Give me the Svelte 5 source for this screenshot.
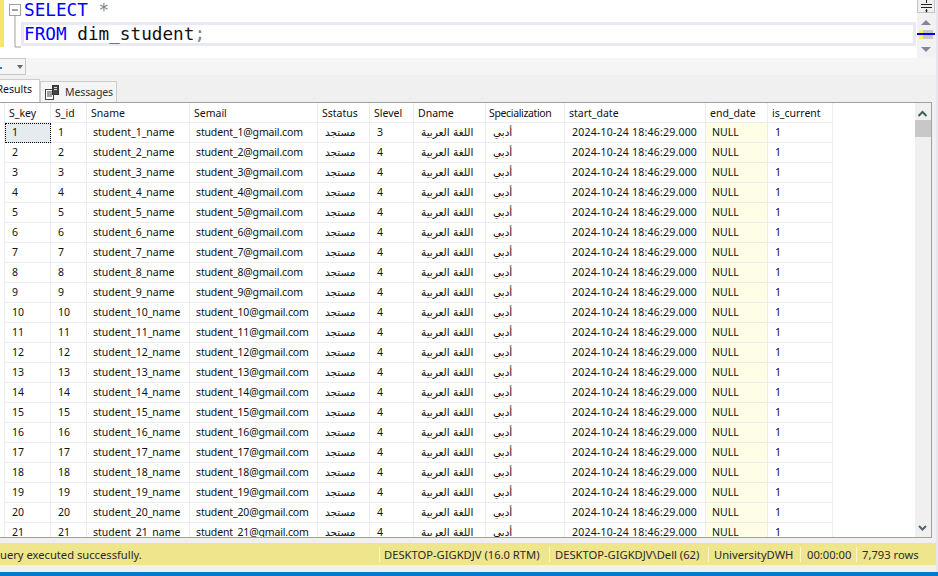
<script>
  const cols = ['S_key','S_id','Sname','Semail','Sstatus','Slevel','Dname','Specialization','start_date','end_date','is_current'];
  const rows = Array.from({length: 21}, (_, i) => i + 1);
</script>

<div class="page">
  <section class="editor">
    <div class="margin"></div>
    <div class="gutter">
      <svg class="fold" width="13" height="48" viewBox="0 0 13 48">
        <rect x="0.5" y="4.5" width="11" height="11" fill="#fff" stroke="#a0a0a0"/>
        <path d="M3 10h6" stroke="#444"/>
        <path d="M6 16v31h6" fill="none" stroke="#a0a0a0"/>
      </svg>
    </div>
    <div class="code">
      <div class="line"><span class="kw">SELECT</span> <span class="op">*</span></div>
      <div class="line current"><span class="kw">FROM</span> dim_student<span class="op">;</span></div>
    </div>
    <aside class="split">
      <div class="splitter">
        <svg width="15" height="13" viewBox="0 0 15 13"><path d="M2 4.5h11M2 7.5h11" stroke="#222"/><path d="M7.5 0v3M7.5 9v3" stroke="#222"/><path d="M6 10.5l1.5 2 1.5-2z" fill="#222"/></svg>
      </div>
      <div class="arrow up"></div>
      <div class="mark"></div>
      <div class="arrow down"></div>
    </aside>
  </section>

  <div class="zoombar">
    <div class="zoomsel"><span class="dot"></span><span class="caret"></span></div>
  </div>

  <div class="results">
    <div class="tabs">
      <div class="tab active">Results</div>
      <div class="tab">
        <svg width="15" height="15" viewBox="0 0 15 15"><rect x="0.5" y="4.5" width="8" height="10" fill="#fff" stroke="#444"/><path d="M2 7h5M2 9h5M2 11h5" stroke="#444"/><rect x="7.5" y="0.5" width="6" height="9" fill="#444" stroke="#333"/><path d="M9 2.5h3M9 4.5h3" stroke="#ddd"/></svg>
        <span class="msgs">Messages</span>
      </div>
    </div>
    <div class="gridframe">
      <div class="grid">
        <div class="row head">
          {#each cols as c}<div class="cell" class:spec={c === 'Specialization'}>{c}</div>{/each}
        </div>
        {#each rows as n}
          <div class="row">
            <div class="cell num" class:selected={n === 1}>{n}</div>
            <div class="cell num">{n}</div>
            <div class="cell">student_{n}_name</div>
            <div class="cell mail">student_{n}@gmail.com</div>
            <div class="cell ar">مستجد</div>
            <div class="cell num">{n === 1 ? 3 : 4}</div>
            <div class="cell ar">اللغة العربية</div>
            <div class="cell ar">أدبي</div>
            <div class="cell date">2024-10-24 18:46:29.000</div>
            <div class="cell null">NULL</div>
            <div class="cell num">1</div>
          </div>
        {/each}
      </div>
      <div class="vscroll">
        <svg class="top" width="15" height="10" viewBox="0 0 15 10"><path d="M3.5 7l4-4 4 4" fill="none" stroke="#40605f" stroke-width="2"/></svg>
        <div class="thumb"></div>
        <svg class="bottom" width="15" height="16" viewBox="0 0 15 16"><path d="M4 6l3.5 3.5L11 6" fill="none" stroke="#50686a" stroke-width="2"/></svg>
      </div>
    </div>
  </div>

  <footer class="status">
    <span class="msg">uery executed successfully.</span>
    <span class="seg s1">DESKTOP-GIGKDJV (16.0 RTM)</span>
    <span class="seg s2">DESKTOP-GIGKDJV\Dell (62)</span>
    <span class="seg s3">UniversityDWH</span>
    <span class="seg s4">00:00:00</span>
    <span class="seg s5">7,793 rows</span>
  </footer>
  <div class="gap"></div>
  <div class="blue"></div>
</div>

<style>
  :global(body) { margin: 0; overflow: hidden; background: #f0f0f0; }
  .page { position: relative; width: 938px; height: 576px; display: flex; flex-direction: column; overflow: hidden; font-family: "Noto Sans", sans-serif; color: #111; }
  .page::after { content: ""; position: absolute; right: 0; top: 0; width: 2px; height: 572px; background: #e6e6f0; }

  .editor { height: 58px; display: flex; background: #fff; flex: none; }
  .margin { width: 4px; height: 47px; background: #f5e56b; flex: none; }
  .gutter { width: 17px; flex: none; }
  .fold { display: block; margin-left: 5px; }
  .code { width: 895px; flex: none; margin-right: 1px; font-family: "DejaVu Sans Mono", monospace; font-size: 17.7px; }
  .line { height: 22px; line-height: 21px; padding-left: 3px; white-space: pre; }
  .line.current { height: 24px; box-sizing: border-box; padding-left: 0; border: 3px solid #e9e9f3; line-height: 18px; }
  .kw { color: #0000ff; }
  .op { color: #808080; }

  .split { width: 21px; background: #f2f2f2; flex: none; }
  .splitter { width: 18px; height: 13px; box-sizing: border-box; background: #f0f0f0; border: 1px solid #c4c4c4; border-top: 0; display: flex; justify-content: center; }
  .arrow { width: 0; height: 0; border-left: 5px solid transparent; border-right: 5px solid transparent; margin-left: 4px; }
  .arrow.up { border-bottom: 5px solid #8a8399; margin-top: 7px; }
  .mark { width: 14px; box-sizing: border-box; height: 9px; margin: 5px 0 0 2px; background: #c8c8c8; position: relative; border-left: 4px solid #ffef60; }
  .mark::after { content: ""; position: absolute; left: -6px; width: 18px; top: 3px; height: 2px; background: #0000ff; }
  .arrow.down { border-top: 5px solid #8a8399; margin-top: 8px; }

  .zoombar { height: 17px; background: #f5f5f5; flex: none; }
  .zoomsel { width: 26px; height: 17px; box-sizing: border-box; background: #f5f5f5; border: 1px solid #c8c8c8; border-left: 0; display: flex; align-items: center; justify-content: space-between; }
  .dot { width: 2px; height: 2px; background: #1c7ac8; margin-top: 3px; }
  .caret { width: 0; height: 0; border-left: 3px solid transparent; border-right: 3px solid transparent; border-top: 4px solid #666; margin-right: 2px; }

  .results { flex: none; display: flex; flex-direction: column; background: #f0f0f0; padding-top: 4px; }
  .tabs { height: 23px; display: flex; align-items: flex-end; font-size: 10.5px; flex: none; position: relative; z-index: 1; }
  .tab { height: 21px; border: 1px solid #ccc; border-bottom: 0; box-sizing: border-box; display: flex; align-items: center; gap: 5px; padding: 0 2px 0 4px; color: #333; background: #f5f5f5; width: 77px; }
  .msgs { letter-spacing: -0.1px; }
  .tab.active { height: 23px; width: 40px; background: #fff; padding: 0 7px 4px 0; justify-content: flex-end; border-left: 0; color: #111; }

  .gridframe { height: 436px; flex: none; margin-right: 6px; background: #fff; border: 1px solid #a0a0a0; border-width: 1px 1px 1px 0; display: flex; box-sizing: border-box; }
  .grid { width: 915px; overflow: hidden; flex: none; }
  .row { display: grid; grid-template-columns: 46px 36px 103px 128px 52px 44px 72px 79px 141px 62px 65px; height: 20px; font-size: 10.5px; line-height: 18px; margin-left: 4px; width: 829px; border-left: 1px solid #ececec; box-sizing: border-box; }
  .cell { box-sizing: border-box; padding-left: 6px; border-right: 1px solid #ececec; border-bottom: 1px solid #ececec; white-space: nowrap; overflow: hidden; }
  .cell.num { padding-left: 7px; }
  .cell.mail { letter-spacing: -0.15px; }
  .cell.date { padding-left: 7px; letter-spacing: 0.22px; }
  .cell.ar { font-family: "DejaVu Sans", "Noto Sans", sans-serif; font-size: 10.5px; padding-left: 7px; }
  .head .cell { padding-left: 4px; font-size: 10.5px; line-height: 20px; }
  .head .cell.spec { letter-spacing: -0.35px; padding-left: 3px; }
  .cell.selected { outline: 1px dotted #000; outline-offset: -1px; background: #e6ebef; }
  .cell.null { background: #fffde6; padding-left: 6px; }

  .vscroll { flex: 1; background: #f0f0f0; position: relative; }
  .top { display: block; margin-top: 6px; }
  .thumb { height: 17px; background: #c8c8c8; margin-top: 1px; }
  .bottom { position: absolute; bottom: 1px; left: 0; }

  .status { height: 22px; margin-top: 5px; background: #efe58c; display: flex; align-items: center; font-size: 11.2px; flex: none; color: #2a2a2a; white-space: nowrap; }
  .msg { width: 379px; flex: none; overflow: hidden; }
  .seg { border-left: 1px solid #fbf6cc; padding-left: 4px; height: 15px; line-height: 15px; box-sizing: border-box; flex: none; }
  .s1 { width: 170px; }
  .s2 { width: 159px; padding-left: 5px; }
  .s3 { width: 92px; padding-left: 5px; }
  .s4 { width: 56px; padding-left: 6px; }
  .s5 { padding-left: 5px; }
  .gap { height: 7px; background: #f0f0f0; flex: none; }
  .blue { flex: 1; background: #007acc; position: relative; z-index: 1; }
</style>
